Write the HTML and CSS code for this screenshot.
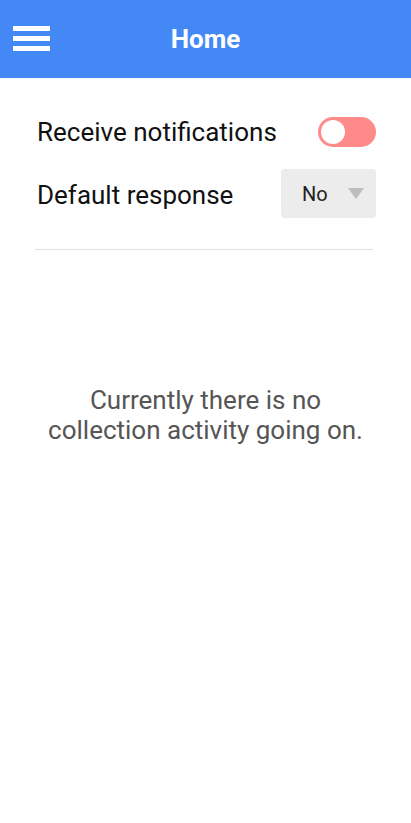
FILE: index.html
```html
<!DOCTYPE html>
<html>
<head>
<meta charset="utf-8">
<link rel="stylesheet" href="styles.css">
</head>
<body>
<header class="topbar">
  <div class="menu-btn">
    <span class="bar"></span><span class="bar"></span><span class="bar"></span>
  </div>
  <h1 class="title">Home</h1>
</header>
<main class="content">
  <div class="setting">
    <span class="label">Receive notifications</span>
    <div class="toggle"><span class="knob"></span></div>
  </div>
  <div class="setting">
    <span class="label">Default response</span>
    <div class="select"><span class="select-value">No</span><span class="arrow"></span></div>
  </div>
  <hr class="divider">
  <p class="empty">Currently there is no<br>collection activity going on.</p>
</main>
</body>
</html>
```
FILE: styles.css
```css
html, body { margin: 0; padding: 0; background: #fff; }
body { font-family: Roboto, "Noto Sans", sans-serif; width: 411px; height: 823px; }
.topbar {
  height: 78px;
  background: #4488f6;
  position: relative;
  display: flex;
  align-items: center;
  justify-content: center;
}
.menu-btn {
  position: absolute;
  left: 13px;
  top: 26px;
  width: 37px;
  display: flex;
  flex-direction: column;
  gap: 5px;
}
.bar { display: block; height: 5px; background: #fff; }
.title {
  margin: 0;
  color: #fff;
  font-size: 26px;
  font-weight: 700;
  line-height: 1;
}
.content { padding: 0 35px 0 37px; }
.setting {
  display: flex;
  align-items: center;
  justify-content: space-between;
}
.setting:first-child { margin-top: 39px; height: 30px; }
.setting:nth-child(2) { margin-top: 22px; height: 49px; }
.label { font-size: 26px; color: #111; }
.setting:nth-child(2) .label { padding-top: 3px; }
.toggle {
  width: 58px; height: 30px; border-radius: 15px;
  background: #ff8a8a; position: relative;
}
.knob {
  position: absolute; left: 3px; top: 3px;
  width: 24px; height: 24px; border-radius: 50%; background: #fff;
}
.select {
  width: 95px; height: 49px; background: #ececec; border-radius: 4px;
  display: flex; align-items: center; justify-content: space-between;
  padding: 0 12px 0 21px; box-sizing: border-box;
}
.select-value { font-size: 20px; color: #222; }
.arrow {
  width: 0; height: 0;
  border-left: 8px solid transparent; border-right: 8px solid transparent;
  border-top: 11px solid #bdbdbd;
}
.divider {
  margin: 31px 3px 0 -2px; border: 0; border-top: 1px solid #e0e0e0; height: 0;
}
.empty {
  margin: 135px 0 0 -2px; text-align: center; font-size: 26px; line-height: 30px; color: #555;
}
```
